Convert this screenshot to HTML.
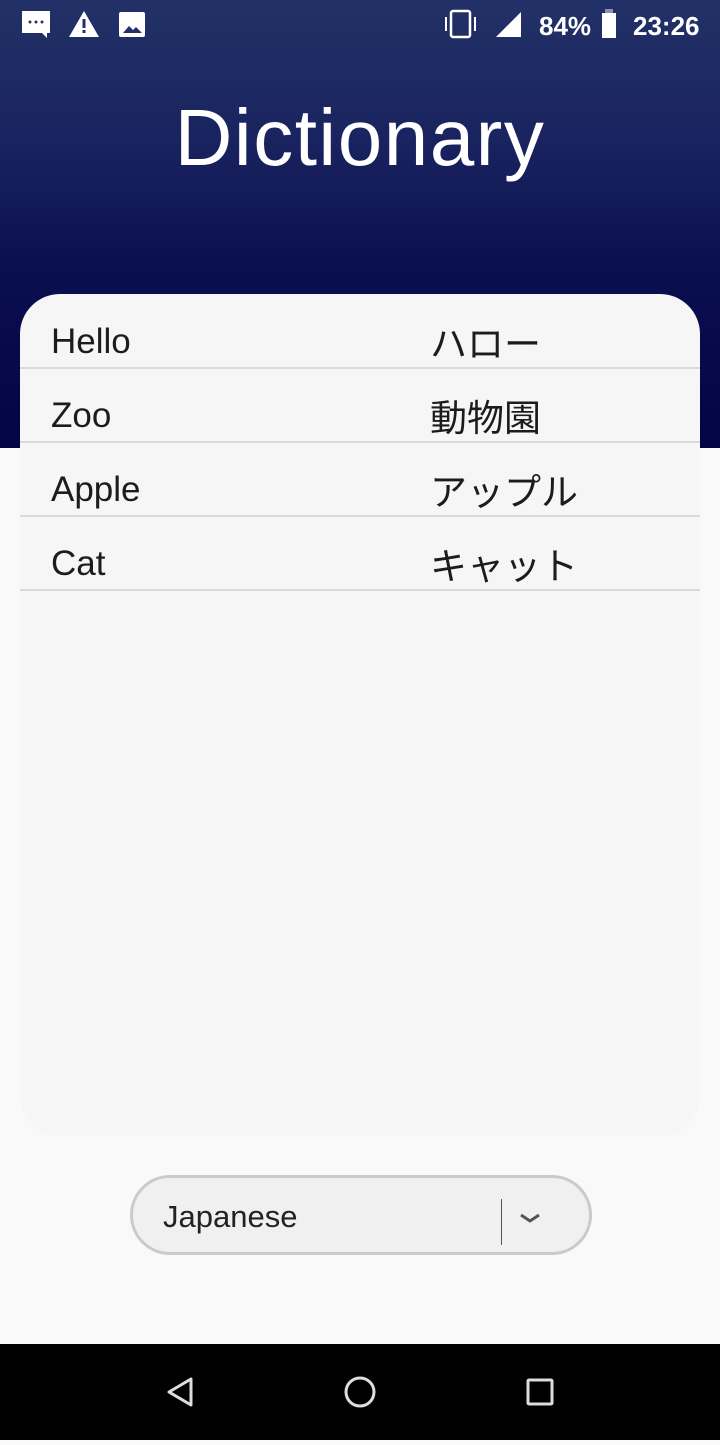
<!DOCTYPE html>
<html><head><meta charset="utf-8"><style>
body{margin:0;width:720px;height:1440px;position:relative;overflow:hidden;background:#f9f9f9;font-family:"Liberation Sans","Noto Sans CJK JP",sans-serif;}
.hdr{position:absolute;left:0;top:0;width:720px;height:448px;background:linear-gradient(#223167 0%,#1a2460 30%,#0a0f4f 60%,#020445 100%);}
.title{position:absolute;top:92px;width:720px;text-align:center;color:#fff;font-size:80px;letter-spacing:1.5px;}
.sb{position:absolute;top:0;left:0;width:720px;height:50px;color:#fff;}
.card{position:absolute;left:20px;top:294px;width:680px;height:842px;background:#f7f6f7;border-radius:40px;}
.row{position:absolute;left:0;width:680px;height:73px;border-bottom:2px solid #d9d9d9;font-size:35px;color:#1c1c1c;}
.row span{position:absolute;line-height:40px;}
.e{left:31px;top:28px;}
.j{left:410px;top:27px;font-size:37px;font-family:"Noto Sans CJK JP",sans-serif;line-height:40px;}
.sel{position:absolute;left:130px;top:1175px;width:456px;height:74px;border:3px solid #cacaca;border-radius:40px;background:#f0f0f0;}
.nav{position:absolute;left:0;top:1344px;width:720px;height:96px;background:#000;}
</style></head><body>
<div class="hdr"></div>
<div class="sb">
<svg width="720" height="50" style="position:absolute;left:0;top:0">
<path d="M22 11h28v22h-3v5l-5-5H22z" fill="#fff"/><circle cx="30" cy="22" r="1.5" fill="#223167"/><circle cx="36" cy="22" r="1.5" fill="#223167"/><circle cx="42" cy="22" r="1.5" fill="#223167"/>
<path d="M84 11l15 26H69z" fill="#fff"/><rect x="82.5" y="19" width="3" height="9" fill="#223167"/><rect x="82.5" y="30" width="3" height="3" fill="#223167"/>
<rect x="119" y="12" width="26" height="25" rx="2" fill="#fff"/><path d="M123 33l6-7 4 4 3-3 6 6z" fill="#223167"/>
<rect x="451" y="11" width="19" height="26" rx="2" fill="none" stroke="#fff" stroke-width="2.5"/><path d="M446 17v14M475 17v14" stroke="#fff" stroke-width="2"/>
<path d="M496 37L521 12V37z" fill="#fff"/>
<rect x="605" y="9" width="8" height="4" fill="#8890b0"/><rect x="602" y="13" width="14" height="25" fill="#fff"/>
<text x="539" y="35" font-size="26" font-weight="bold" fill="#fff" font-family="Liberation Sans">84%</text>
<text x="633" y="35" font-size="26" font-weight="bold" fill="#fff" font-family="Liberation Sans">23:26</text>
</svg></div>
<div class="title">Dictionary</div>
<div class="card">
<div class="row" style="top:0"><span class="e">Hello</span><span class="j">ハロー</span></div>
<div class="row" style="top:74px"><span class="e">Zoo</span><span class="j">動物園</span></div>
<div class="row" style="top:148px"><span class="e">Apple</span><span class="j">アップル</span></div>
<div class="row" style="top:222px"><span class="e">Cat</span><span class="j">キャット</span></div>
</div>
<div class="sel">
<span style="position:absolute;left:30px;top:21px;font-size:31px;color:#222">Japanese</span>
<div style="position:absolute;left:368px;top:21px;width:1px;height:46px;background:#555"></div>
<svg style="position:absolute;left:385px;top:33px" width="24" height="14"><path d="M3 4l9 6 9-6" fill="none" stroke="#555" stroke-width="3"/></svg>
</div>
<div class="nav">
<svg width="720" height="96">
<path d="M191 35v26l-22-13z" fill="none" stroke="#ddd" stroke-width="3" stroke-linejoin="round"/>
<circle cx="360" cy="48" r="14" fill="none" stroke="#ddd" stroke-width="3"/>
<rect x="528" y="36" width="24" height="24" rx="1" fill="none" stroke="#ddd" stroke-width="3"/>
</svg></div>
</body></html>
